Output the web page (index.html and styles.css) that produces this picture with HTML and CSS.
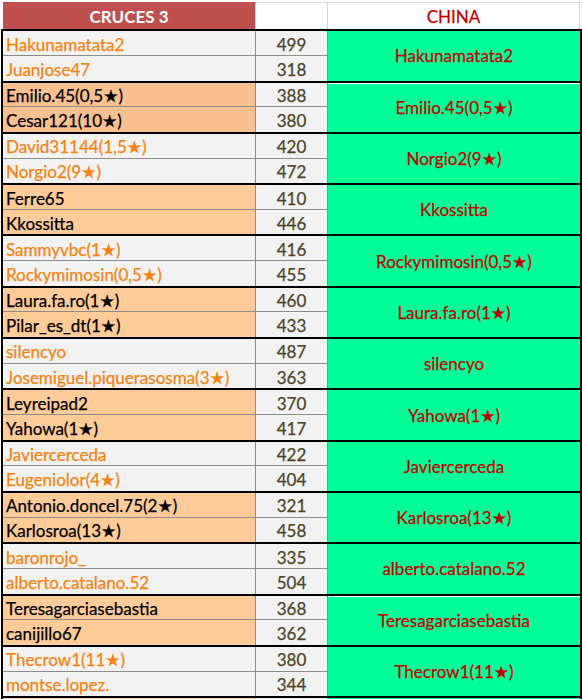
FILE: index.html
```html
<!DOCTYPE html>
<html>
<head>
<meta charset="utf-8">
<link rel="stylesheet" href="styles.css">
</head>
<body>
<div class="sheet">
  <div class="head">
    <div class="h-gap"></div>
    <div class="h-cruces">CRUCES 3</div>
    <div class="h-num"></div>
    <div class="h-china">CHINA</div>
    <div class="h-end"></div>
  </div>

  <div class="pair odd">
    <div class="name r1">Hakunamatata2</div><div class="num r1">499</div>
    <div class="china">Hakunamatata2</div>
    <div class="name r2">Juanjose47</div><div class="num r2">318</div>
  </div>
  <div class="pair even deep white-top">
    <div class="name r1">Emilio.45(0,5★)</div><div class="num r1">388</div>
    <div class="china">Emilio.45(0,5★)</div>
    <div class="name r2">Cesar121(10★)</div><div class="num r2">380</div>
  </div>
  <div class="pair odd">
    <div class="name r1">David31144(1,5★)</div><div class="num r1">420</div>
    <div class="china">Norgio2(9★)</div>
    <div class="name r2">Norgio2(9★)</div><div class="num r2">472</div>
  </div>
  <div class="pair even">
    <div class="name r1">Ferre65</div><div class="num r1">410</div>
    <div class="china">Kkossitta</div>
    <div class="name r2">Kkossitta</div><div class="num r2">446</div>
  </div>
  <div class="pair odd">
    <div class="name r1">Sammyvbc(1★)</div><div class="num r1">416</div>
    <div class="china">Rockymimosin(0,5★)</div>
    <div class="name r2">Rockymimosin(0,5★)</div><div class="num r2">455</div>
  </div>
  <div class="pair even">
    <div class="name r1">Laura.fa.ro(1★)</div><div class="num r1">460</div>
    <div class="china">Laura.fa.ro(1★)</div>
    <div class="name r2">Pilar_es_dt(1★)</div><div class="num r2">433</div>
  </div>
  <div class="pair odd">
    <div class="name r1">silencyo</div><div class="num r1">487</div>
    <div class="china">silencyo</div>
    <div class="name r2">Josemiguel.piquerasosma(3★)</div><div class="num r2">363</div>
  </div>
  <div class="pair even">
    <div class="name r1">Leyreipad2</div><div class="num r1">370</div>
    <div class="china">Yahowa(1★)</div>
    <div class="name r2">Yahowa(1★)</div><div class="num r2">417</div>
  </div>
  <div class="pair odd">
    <div class="name r1">Javiercerceda</div><div class="num r1">422</div>
    <div class="china">Javiercerceda</div>
    <div class="name r2">Eugeniolor(4★)</div><div class="num r2">404</div>
  </div>
  <div class="pair even">
    <div class="name r1">Antonio.doncel.75(2★)</div><div class="num r1">321</div>
    <div class="china">Karlosroa(13★)</div>
    <div class="name r2">Karlosroa(13★)</div><div class="num r2">458</div>
  </div>
  <div class="pair odd">
    <div class="name r1">baronrojo_</div><div class="num r1">335</div>
    <div class="china">alberto.catalano.52</div>
    <div class="name r2">alberto.catalano.52</div><div class="num r2">504</div>
  </div>
  <div class="pair even white-top">
    <div class="name r1">Teresagarciasebastia</div><div class="num r1">368</div>
    <div class="china">Teresagarciasebastia</div>
    <div class="name r2">canijillo67</div><div class="num r2">362</div>
  </div>
  <div class="pair odd">
    <div class="name r1">Thecrow1(11★)</div><div class="num r1">380</div>
    <div class="china">Thecrow1(11★)</div>
    <div class="name r2">montse.lopez.</div><div class="num r2">344</div>
  </div>
  <div class="pair even">
    <div class="name r1"></div><div class="num r1"></div>
    <div class="china"></div>
    <div class="name r2"></div><div class="num r2"></div>
  </div>
</div>
</body>
</html>
```

FILE: styles.css
```css
html, body {
  margin: 0;
  padding: 0;
  overflow: hidden;
  background: #ffffff;
}
body {
  font-family: Lato, "DejaVu Sans", sans-serif;
  font-size: 17px;
  -webkit-text-stroke: 0.25px currentColor;
}
.sheet {
  width: 581px;
  margin-left: 1px;
}
.head {
  display: grid;
  grid-template-columns: 2px 253px 72px 252px 2px;
  height: 29.3px;
  box-sizing: border-box;
  padding-top: 2px;
}
.head > div {
  border-top: 1px solid #dadada;
  box-sizing: border-box;
  display: flex;
  align-items: center;
  justify-content: center;
}
.h-cruces {
  background: #c0504d;
  color: #ffffff;
  font-weight: 700;
  -webkit-text-stroke: 0;
  border-right: 1px solid #d4d4d4;
  border-top-color: #c0504d !important;
}
.h-num {
  border-right: 1px solid #d4d4d4;
}
.h-china {
  color: #c00000;
  border-right: 1px solid #d4d4d4;
}
.pair {
  display: grid;
  grid-template-columns: 253px 72px 252px;
  grid-template-rows: 1fr 1fr;
  height: 51.3px;
  box-sizing: border-box;
  border-top: 2px solid #000;
  border-left: 2px solid #000;
  border-right: 2px solid #000;
}
.name {
  grid-column: 1;
  box-sizing: border-box;
  border-right: 1px solid #8c8c8c;
  padding-left: 3px;
  display: flex;
  align-items: center;
  white-space: nowrap;
  line-height: 1;
  padding-top: 2px;
}
.num {
  grid-column: 2;
  box-sizing: border-box;
  background: #f2f2f2;
  color: #4a4528;
  border-right: 1px solid #8c8c8c;
  display: flex;
  align-items: center;
  justify-content: center;
  line-height: 1;
  padding-top: 2px;
}
.r1 { grid-row: 1; border-bottom: 1px solid #8c8c8c; }
.r2 { grid-row: 2; }
.china {
  grid-column: 3;
  grid-row: 1 / 3;
  background: #00ff99;
  color: #c00000;
  display: flex;
  align-items: center;
  justify-content: center;
  white-space: nowrap;
  box-sizing: border-box;
}
.white-top .china {
  border-top: 1px solid #ffffff;
}
.odd .name {
  background: #f2f2f2;
  color: #f7830f;
}
.even .name {
  background: #ffcc99;
  color: #000000;
}
.even.deep .name {
  background: #fac090;
}
```
